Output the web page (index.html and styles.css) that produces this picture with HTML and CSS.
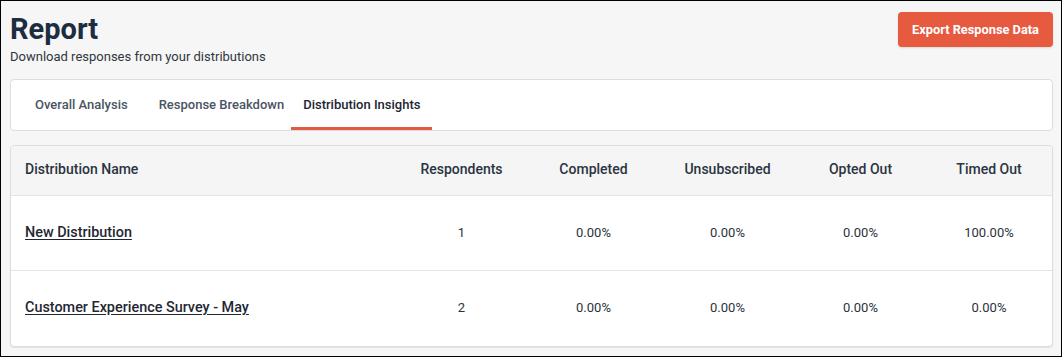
FILE: index.html
```html
<!DOCTYPE html>
<html lang="en">
<head>
<meta charset="utf-8">
<title>Report</title>
<link rel="stylesheet" href="styles.css">
</head>
<body>
<div class="frame">
  <header class="page-head">
    <div class="titles">
      <h1 class="title">Report</h1>
      <p class="subtitle">Download responses from your distributions</p>
    </div>
    <button class="export-btn" type="button">Export Response Data</button>
  </header>

  <nav class="tabs-card">
    <a class="tab tab-first">Overall Analysis</a>
    <a class="tab tab-second">Response Breakdown</a>
    <a class="tab tab-active">Distribution Insights</a>
  </nav>

  <section class="table-card">
    <div class="row row-head">
      <div class="cell cell-name">Distribution Name</div>
      <div class="cell cell-num">Respondents</div>
      <div class="cell cell-num">Completed</div>
      <div class="cell cell-num">Unsubscribed</div>
      <div class="cell cell-num">Opted Out</div>
      <div class="cell cell-num">Timed Out</div>
    </div>
    <div class="row row-body">
      <div class="cell cell-name"><a class="dist-link">New Distribution</a></div>
      <div class="cell cell-num">1</div>
      <div class="cell cell-num">0.00%</div>
      <div class="cell cell-num">0.00%</div>
      <div class="cell cell-num">0.00%</div>
      <div class="cell cell-num">100.00%</div>
    </div>
    <div class="row row-body row-last">
      <div class="cell cell-name"><a class="dist-link">Customer Experience Survey - May</a></div>
      <div class="cell cell-num">2</div>
      <div class="cell cell-num">0.00%</div>
      <div class="cell cell-num">0.00%</div>
      <div class="cell cell-num">0.00%</div>
      <div class="cell cell-num">0.00%</div>
    </div>
  </section>
</div>
</body>
</html>
```

FILE: styles.css
```css
* { box-sizing: border-box; }

html, body {
  margin: 0;
  padding: 0;
  background: #ffffff;
}

body {
  font-family: Roboto, "Liberation Sans", Arial, sans-serif;
  color: #2d3748;
}

.frame {
  width: 1062px;
  height: 357px;
  border: 1px solid #000;
  background: #f6f6f6;
  padding: 11px 8px 0 9px;
  overflow: hidden;
}

.page-head {
  display: flex;
  justify-content: space-between;
  align-items: flex-start;
}

.titles { padding-top: 1px; }

.title {
  margin: 0;
  font-size: 29px;
  line-height: 32px;
  font-weight: 700;
  color: #1c2d3f;
}

.subtitle {
  margin: 4px 0 0;
  font-size: 13px;
  line-height: 16px;
  color: #2f3640;
}

.export-btn {
  width: 155px;
  height: 35px;
  border: none;
  border-radius: 4px;
  background: #e65a40;
  color: #fff;
  font-family: Roboto, "Liberation Sans", Arial, sans-serif;
  font-size: 12.8px;
  font-weight: 700;
  padding: 0;
  box-shadow: 0 1px 2px rgba(0,0,0,0.12);
}

.tabs-card {
  margin-top: 14px;
  height: 52px;
  background: #fff;
  border: 1px solid #dcdce3;
  border-radius: 4px;
  display: flex;
  align-items: stretch;
}

.tab {
  display: flex;
  align-items: center;
  padding: 2px 12px 0;
  font-size: 13px;
  font-weight: 500;
  color: #4a5462;
  border-bottom: 3px solid transparent;
  white-space: nowrap;
}

.tab-first { margin-left: 12px; }
.tab-second { margin-left: 7px; padding-right: 0; }
.tab-active {
  margin-left: 7px;
  color: #1c2532;
  border-bottom-color: #e35a44;
}

.table-card {
  margin-top: 14px;
  background: #fff;
  border: 1px solid #dcdce3;
  border-radius: 4px;
  overflow: hidden;
  box-shadow: 0 1px 1px rgba(0,0,0,0.08);
}

.row {
  display: grid;
  grid-template-columns: 385px 131px 133px 135px 131px 1fr;
  align-items: center;
  border-bottom: 1px solid #e2e2e7;
}

.row-last { border-bottom: none; }

.row-head {
  height: 50px;
  background: #f5f5f6;
  font-size: 14px;
  font-weight: 500;
  color: #2b3440;
  padding-bottom: 3px;
}

.row-body {
  height: 75px;
  font-size: 13px;
  color: #2b323c;
}

.cell-name { padding-left: 14px; }
.cell-num { text-align: center; }

.dist-link {
  font-size: 14.4px;
  font-weight: 500;
  color: #1f2733;
  text-decoration: underline;
  text-underline-offset: 2px;
  position: relative;
  top: -1px;
}

.row-body .cell-num { position: relative; top: -1px; }
```
